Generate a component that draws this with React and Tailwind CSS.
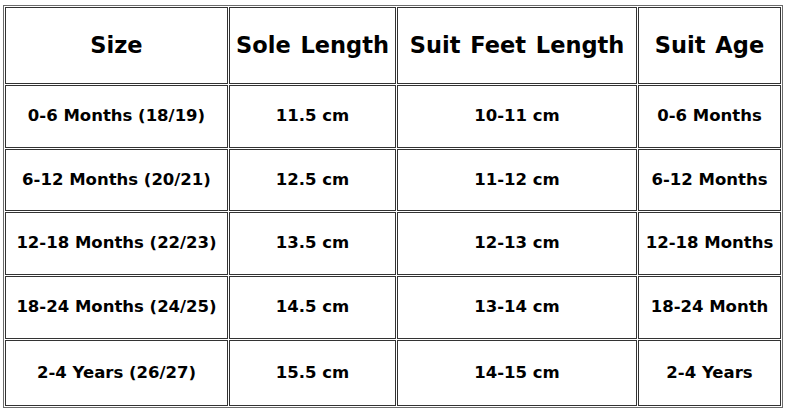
import React from 'react';

const headers = ['Size', 'Sole Length', 'Suit Feet Length', 'Suit Age'];

const rows = [
  { h: 'h-[63px]', cells: ['0-6 Months (18/19)', '11.5 cm', '10-11 cm', '0-6 Months'] },
  { h: 'h-[62px]', cells: ['6-12 Months (20/21)', '12.5 cm', '11-12 cm', '6-12 Months'] },
  { h: 'h-[63px]', cells: ['12-18 Months (22/23)', '13.5 cm', '12-13 cm', '12-18 Months'] },
  { h: 'h-[63px]', cells: ['18-24 Months (24/25)', '14.5 cm', '13-14 cm', '18-24 Month'] },
  { h: 'h-[66px]', cells: ['2-4 Years (26/27)', '15.5 cm', '14-15 cm', '2-4 Years'] },
];

const font = { fontFamily: '"DejaVu Sans", "Noto Sans", sans-serif' };

export default function App() {
  return (
    <div className="w-[792px] h-[413px] bg-white pt-[5px] pl-[3px]" style={font}>
      <div className="grid w-[780px] grid-cols-[223px_167px_240px_143px] gap-px p-px border border-[#6b6b6b]">
        {headers.map((t) => (
          <div
            key={t}
            className="h-[77px] flex items-center justify-center border border-[#333] text-[22.5px] font-semibold text-black whitespace-nowrap [word-spacing:2px]"
          >
            {t}
          </div>
        ))}
        {rows.map((r) =>
          r.cells.map((c, i) => (
            <div
              key={r.cells[0] + i}
              className={`${r.h} flex items-center justify-center border border-[#333] text-[16.5px] font-bold text-black whitespace-nowrap`}
            >
              {c}
            </div>
          ))
        )}
      </div>
    </div>
  );
}
